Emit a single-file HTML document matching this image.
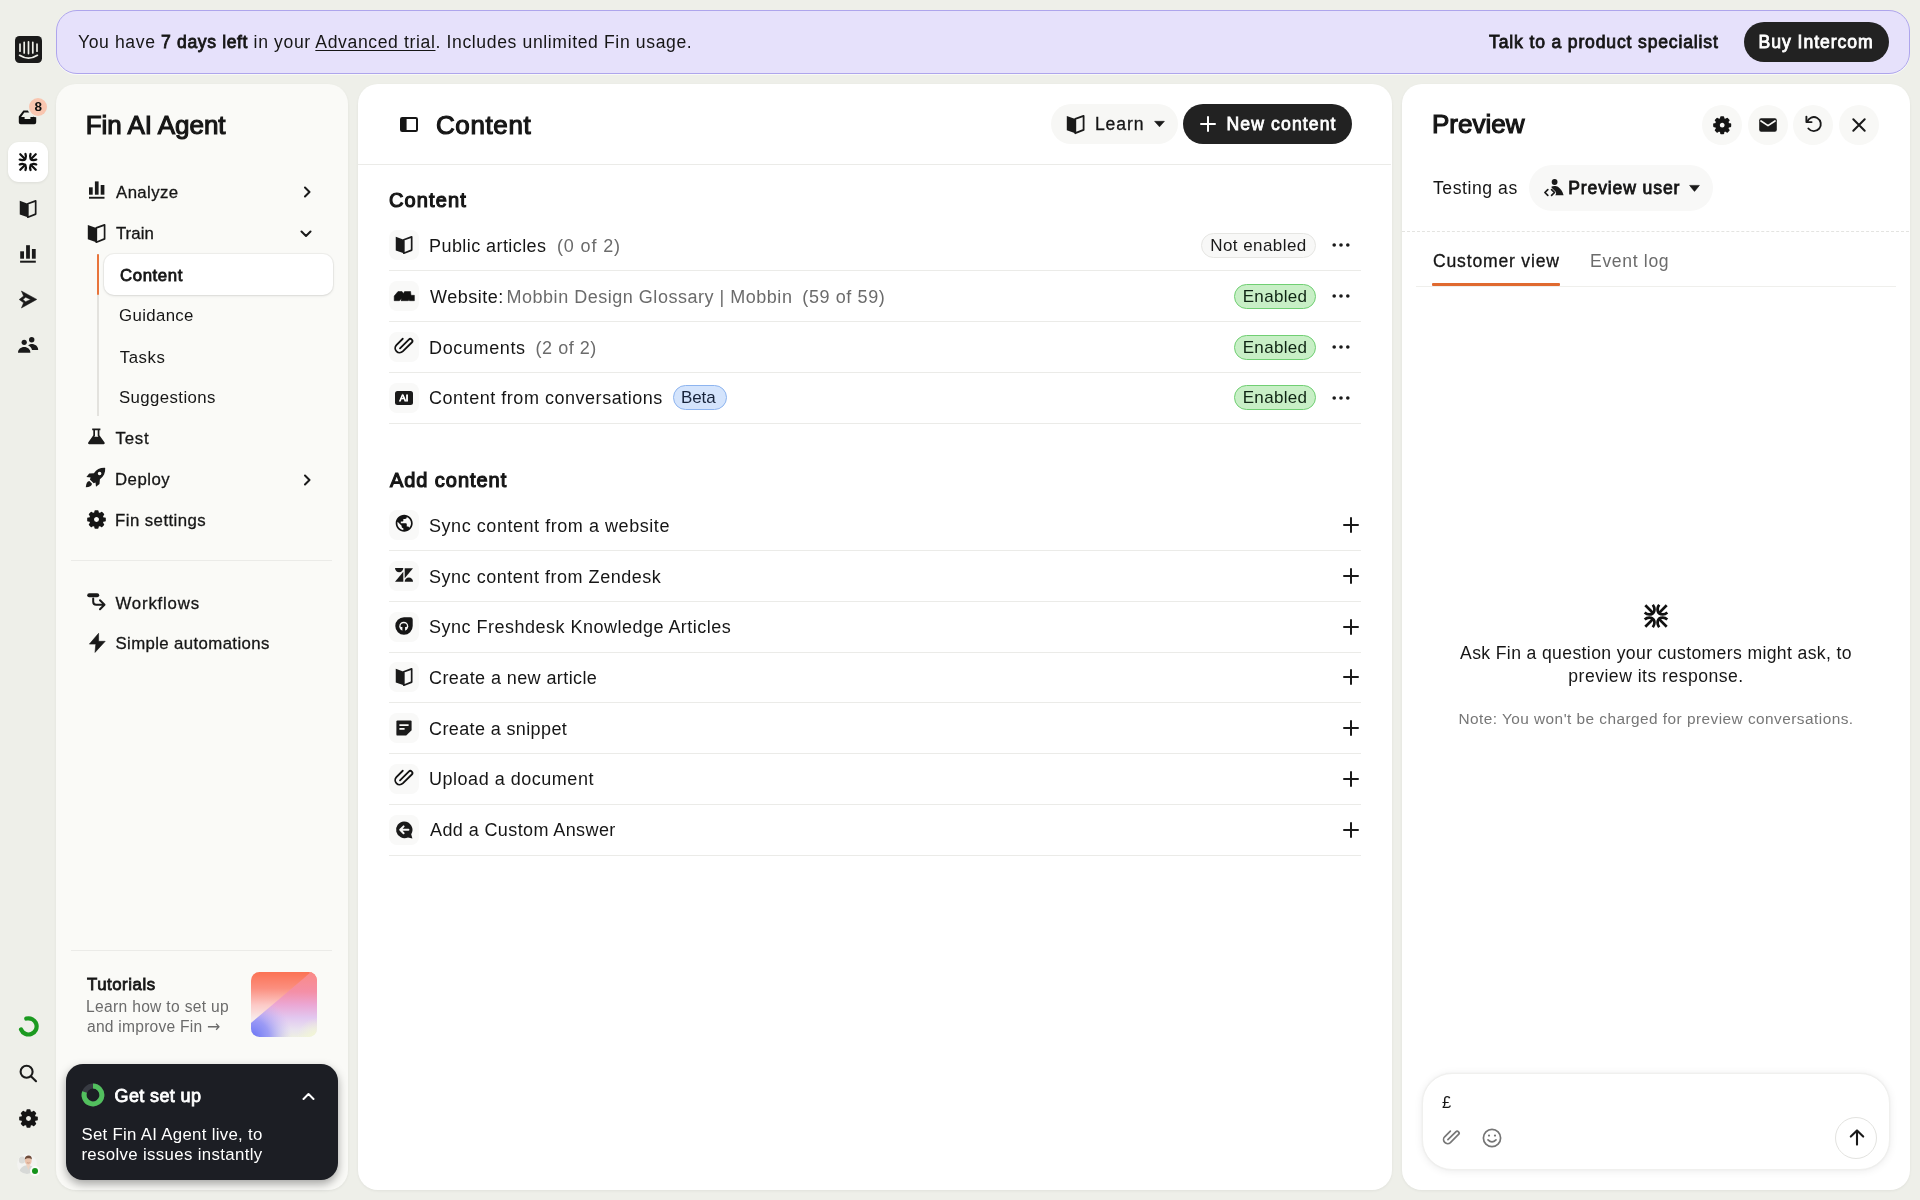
<!DOCTYPE html>
<html lang="en">
<head>
<meta charset="utf-8">
<title>Fin AI Agent – Content</title>
<style>
*{box-sizing:border-box;margin:0;padding:0}
html,body{width:1920px;height:1200px;overflow:hidden}
body{background:#eeefe9;font-family:"Liberation Sans",Arial,sans-serif;font-size:16.8px;color:#161616;position:relative;-webkit-font-smoothing:antialiased}
.abs{position:absolute}
#banner,#rail,#side,#main,#prev{will-change:transform}
.t{position:absolute;white-space:nowrap;line-height:20px;height:20px}
.m{-webkit-text-stroke:0.3px currentColor}
.b{font-weight:400;-webkit-text-stroke:.8px currentColor}
.hb{font-weight:400;-webkit-text-stroke:1.15px currentColor}
svg{display:block;position:absolute;overflow:visible}
/* banner */
#banner{left:56px;top:10px;width:1854px;height:64px;border-radius:21px;background:#e6e1fb;border:1.5px solid #aea5ec;box-shadow:0 1px 0 rgba(255,255,255,.6)}
/* panels */
#side{left:56px;top:84px;width:292px;height:1106px;border-radius:20px;background:#fafaf7;box-shadow:0 1px 3px rgba(0,0,0,.06)}
#main{left:358px;top:84px;width:1034px;height:1106px;border-radius:20px;background:#fff;box-shadow:0 1px 3px rgba(0,0,0,.06)}
#prev{left:1402px;top:84px;width:508px;height:1106px;border-radius:20px;background:#fff;box-shadow:0 1px 3px rgba(0,0,0,.06)}
.hr{position:absolute;height:1px;background:#ebebe8}
.ib{position:absolute;left:30.7px;width:30px;height:30px;border-radius:8px;background:#f9f9f8}
.row{position:absolute;left:71px;font-size:18px;letter-spacing:.25px}
.grey{color:#6b6b6b}
.pill{position:absolute;height:25px;border-radius:13px;font-size:16px;line-height:23px;text-align:center;border:1px solid}
.en{left:876px;width:82px;background:#c8efc6;border-color:#70cf73;color:#14301a}
.ne{left:843px;width:115px;background:#f8f8f7;border-color:#e6e6e3;color:#1a1a1a}
.cb{position:absolute;top:20px;width:40px;height:40px;border-radius:20px;background:#f8f8f6}
</style>
</head>
<body>

<!-- ===== top banner ===== -->
<div id="banner" class="abs">
  <div id="t1" class="t" style="left:20.9px;top:20.8px;font-size:17.6px;letter-spacing:0.62px">You have <span class="b">7 days left</span> in your <span style="text-decoration:underline;text-underline-offset:2px;text-decoration-thickness:1px">Advanced trial</span>. Includes unlimited Fin usage.</div>
  <div id="t2" class="t b" style="left:1432.1px;top:20.8px;font-size:17.6px;letter-spacing:0.83px">Talk to a product specialist</div>
  <div class="abs" style="left:1687px;top:11px;width:145px;height:40px;border-radius:20px;background:#222"></div>
  <div id="t3" class="t b" style="left:1701.5px;top:20.8px;font-size:17.6px;color:#fff;letter-spacing:0.96px">Buy Intercom</div>
</div>

<!-- ===== left rail ===== -->
<div id="rail" class="abs" style="left:0;top:0;width:56px;height:1200px">
  <div class="abs" style="left:8px;top:142px;width:40px;height:40px;border-radius:11px;background:#fff;box-shadow:0 1px 3px rgba(0,0,0,.08)"></div>

  <!-- logo -->
  <svg style="left:14.5px;top:36px" width="27" height="27" viewBox="0 0 27 27"><rect width="27" height="27" rx="4.5" fill="#1a1a1a"/><g stroke="#eeefe9" stroke-width="1.7" stroke-linecap="round" fill="none"><path d="M5 8.2V15.2M9.2 6.3V17M13.5 5.8V17.6M17.8 6.3V17M22 8.2V15.2"/><path d="M4.6 19.3Q13.5 25 22.4 19.3"/></g></svg>
  <!-- inbox -->
  <svg style="left:17.9px;top:109.9px" width="19" height="14.6" viewBox="0 0 19 14" preserveAspectRatio="none" fill="#111"><path d="M5.4 0.4H13.6L18.2 6.2V11.7Q18.2 13.6 16.3 13.6H2.7Q0.8 13.6 0.8 11.7V6.2ZM6.3 2.3 3.1 6.6H6.6V8.7H12.4V6.6H15.9L12.7 2.3Z" fill-rule="evenodd"/></svg>
  <div class="abs" style="left:29.4px;top:98.1px;width:17.6px;height:17.6px;border-radius:9px;background:#f9c6b0;box-shadow:0 0 0 1.6px #eeefe9"></div>
  <div id="t4" class="t" style="left:29.4px;top:97.2px;width:17.6px;text-align:center;font-size:13.5px;font-weight:700;color:#111">8</div>
  <!-- fin -->
  <svg style="left:19px;top:153.4px" width="18" height="18" viewBox="0 0 24 24" fill="none" stroke="#111" stroke-width="3" stroke-linecap="round"><g><path d="M1.7 1.7 8.3 8.3"/><path d="M8.6 1.3C10.2 5.2 8.6 9.6 4.6 9.6C3.2 9.6 2 9.3 1 8.8"/></g><g transform="translate(24 0) scale(-1 1)"><path d="M1.7 1.7 8.3 8.3"/><path d="M8.6 1.3C10.2 5.2 8.6 9.6 4.6 9.6C3.2 9.6 2 9.3 1 8.8"/></g><g transform="translate(0 24) scale(1 -1)"><path d="M1.7 1.7 8.3 8.3"/><path d="M8.6 1.3C10.2 5.2 8.6 9.6 4.6 9.6C3.2 9.6 2 9.3 1 8.8"/></g><g transform="translate(24 24) scale(-1 -1)"><path d="M1.7 1.7 8.3 8.3"/><path d="M8.6 1.3C10.2 5.2 8.6 9.6 4.6 9.6C3.2 9.6 2 9.3 1 8.8"/></g></svg>
  <!-- book -->
  <svg style="left:19px;top:200px" width="18" height="18" viewBox="0 0 19 19"><path d="M0.8 0.9 9.3 3.9V18.2L0.8 15.2Z" fill="#1a1a1a"/><path d="M9.3 3.9 17.6 0.9V14.9L9.3 18.2Z" fill="none" stroke="#1a1a1a" stroke-width="1.8" stroke-linejoin="round"/></svg>
  <!-- chart -->
  <svg style="left:20px;top:245px" width="16" height="18" viewBox="0 0 16 18" fill="#1a1a1a"><rect x="0.2" y="6.3" width="3.8" height="7.4"/><rect x="6.1" y="0.2" width="3.8" height="13.5"/><rect x="11.9" y="4" width="3.8" height="9.7"/><rect x="0.1" y="15.7" width="15.7" height="2"/></svg>
  <!-- send -->
  <svg style="left:19px;top:291px" width="18" height="17" viewBox="0 0 18 17" fill="#1a1a1a"><path d="M2.4 0 17.8 8.4 2.4 17 4.6 11.8 0.2 8.5 4.6 5.1ZM6.6 6.3 3.9 8.5 6.6 10.7 11.6 8.4Z" fill-rule="evenodd" stroke="#1a1a1a" stroke-width=".5" stroke-linejoin="round"/></svg>
  <!-- people -->
  <svg style="left:18px;top:337px" width="21" height="16" viewBox="0 0 21 16" fill="#1a1a1a"><circle cx="6.2" cy="5.3" r="2.6"/><circle cx="13.7" cy="2.8" r="2.7"/><path d="M0 15.7C0 12.3 2.8 10 6.2 10S12.4 12.3 12.4 15.7Z"/><path d="M10.2 8.6C11.2 7.6 12.4 7.1 13.7 7.1 17.1 7.1 20.2 9.4 20.2 13H14C13.5 11 12.2 9.4 10.2 8.6Z"/></svg>
  <!-- spinner -->
  <svg style="left:18px;top:1016px" width="21" height="21" viewBox="0 0 21 21" fill="none" stroke="#1b9a20" stroke-width="4.2" stroke-linecap="round"><path d="M8.3 2.6A8.1 8.1 0 1 1 3 13.4"/></svg>
  <!-- search -->
  <svg style="left:19px;top:1064px" width="19" height="19" viewBox="0 0 19 19" fill="none" stroke="#1a1a1a" stroke-width="2.1" stroke-linecap="round"><circle cx="7.6" cy="7.8" r="6"/><path d="M12.2 12.4 17 17.2"/></svg>
  <!-- gear -->
  <svg style="left:18.5px;top:1109px" width="19" height="19" viewBox="0 0 20 20"><path d="M8.39 3.29 L8.73 1.09 L11.27 1.09 L11.61 3.29 L13.61 4.12 L15.40 2.80 L17.20 4.60 L15.88 6.39 L16.71 8.39 L18.91 8.73 L18.91 11.27 L16.71 11.61 L15.88 13.61 L17.20 15.40 L15.40 17.20 L13.61 15.88 L11.61 16.71 L11.27 18.91 L8.73 18.91 L8.39 16.71 L6.39 15.88 L4.60 17.20 L2.80 15.40 L4.12 13.61 L3.29 11.61 L1.09 11.27 L1.09 8.73 L3.29 8.39 L4.12 6.39 L2.80 4.60 L4.60 2.80 L6.39 4.12Z M10 6.5a3.5 3.5 0 1 0 0 7a3.5 3.5 0 1 0 0-7Z" fill="#151515" stroke="#151515" stroke-width="1.8" stroke-linejoin="round" fill-rule="evenodd"/></svg>
  <!-- avatar -->
  <svg style="left:17.3px;top:1154px" width="20" height="20" viewBox="0 0 20 20"><defs><clipPath id="av"><circle cx="10" cy="10" r="10"/></clipPath></defs><g clip-path="url(#av)"><rect width="20" height="20" fill="#f3f3f1"/><ellipse cx="5" cy="6" rx="3.2" ry="3.6" fill="#dcdcd9"/><path d="M1.5 20C2.5 14 6 11.2 10.5 11.2S17.5 13.5 18.5 20Z" fill="#d7d9d7"/><path d="M9 10.5 11.5 16 13.5 10.5Z" fill="#eed3c2"/><ellipse cx="11.3" cy="6.8" rx="3.3" ry="4" fill="#ebc4ad"/><path d="M7.8 5.6C7.8 2.6 9.4 1.4 11.6 1.4S15 2.8 14.8 5.4C13.6 4 9.6 3.8 7.8 5.6Z" fill="#6d4a38"/><path d="M9.9 8.6Q11.3 9.6 12.7 8.6" stroke="#b98570" stroke-width=".6" fill="none"/></g></svg>
  <div class="abs" style="left:29.9px;top:1166.3px;width:10px;height:10px;border-radius:5px;background:#fbfbf9"></div>
  <div class="abs" style="left:31.8px;top:1168.2px;width:6.2px;height:6.2px;border-radius:3.1px;background:#15931a"></div>
  <!--RAIL-ICONS-->
</div>

<!-- ===== sidebar ===== -->
<div id="side" class="abs">
  <div id="t5" class="t hb" style="left:29.7px;top:25.8px;font-size:26px;line-height:30px;height:30px;letter-spacing:-0.03px">Fin AI Agent</div>

  <!-- Analyze -->
  <svg style="left:33px;top:97px" width="16" height="18" viewBox="0 0 16 18" fill="#1a1a1a"><rect x="0" y="6.3" width="3.7" height="7.4"/><rect x="5.9" y="0.4" width="3.7" height="13.3"/><rect x="11.7" y="4" width="3.7" height="9.7"/><rect x="0" y="15.8" width="15.5" height="1.9"/></svg>
  <div id="t6" class="t m" style="left:60.1px;top:98.5px;letter-spacing:0.37px">Analyze</div>
  <svg style="left:246px;top:102px" width="10" height="12" viewBox="0 0 10 12" fill="none" stroke="#1a1a1a" stroke-width="2" stroke-linecap="round" stroke-linejoin="round"><path d="M3 1.5 7.5 6 3 10.5"/></svg>
  <!-- Train -->
  <svg style="left:31px;top:140px" width="19" height="19" viewBox="0 0 19 19"><path d="M0.8 0.9 9.3 3.9V18.2L0.8 15.2Z" fill="#1a1a1a"/><path d="M9.3 3.9 17.6 0.9V14.9L9.3 18.2Z" fill="none" stroke="#1a1a1a" stroke-width="1.7" stroke-linejoin="round"/></svg>
  <div id="t7" class="t m" style="left:59.9px;top:140.3px;letter-spacing:0.08px">Train</div>
  <svg style="left:244px;top:145px" width="12" height="10" viewBox="0 0 12 10" fill="none" stroke="#1a1a1a" stroke-width="2" stroke-linecap="round" stroke-linejoin="round"><path d="M1.5 2.5 6 7 10.5 2.5"/></svg>
  <!-- sub nav -->
  <div class="abs" style="left:41px;top:170px;width:1.5px;height:162px;background:#e3e2de"></div>
  <div class="abs" style="left:40.5px;top:170px;width:2.5px;height:41px;background:#e8743b;border-radius:1px"></div>
  <div class="abs" style="left:48px;top:170px;width:229px;height:41px;border-radius:10px;background:#fff;box-shadow:0 0 0 1px rgba(0,0,0,.04),0 1px 3px rgba(0,0,0,.10)"></div>
  <div id="t8" class="t b" style="left:64px;top:182.3px;letter-spacing:0.6px">Content</div>
  <div id="t9" class="t" style="left:63px;top:222.3px;letter-spacing:0.37px">Guidance</div>
  <div id="t10" class="t" style="left:63.8px;top:263.5px;letter-spacing:0.53px">Tasks</div>
  <div id="t11" class="t" style="left:63px;top:304px;letter-spacing:0.4px">Suggestions</div>
  <!-- Test -->
  <svg style="left:31px;top:344px" width="19" height="17" viewBox="0 0 19 17" fill="#1a1a1a"><path d="M5.2 0.6H13.4V2.3H12.4V7.2L17.6 14.6Q18.2 16.2 16.6 16.2H2.2Q0.6 16.2 1.2 14.6L6.3 7.2V2.3H5.2Z M8 2.3V7.7L7.3 8.8H11.4L10.7 7.7V2.3Z" fill-rule="evenodd"/></svg>
  <div id="t12" class="t m" style="left:59.5px;top:344.8px;letter-spacing:0.81px">Test</div>
  <!-- Deploy -->
  <svg style="left:29px;top:383px" width="21" height="21" viewBox="0 0 21 21" fill="#1a1a1a"><path d="M20.2 0.9C15.5 0.6 11.6 2.4 8.9 6.2L4.2 6.6 1.4 10.1 5.6 10.6 4.9 12.4 8.7 16.2 10.5 15.5 11 19.7 14.5 16.9 14.9 12.2C18.7 9.5 20.5 5.6 20.2 0.9ZM14.6 8.3A1.8 1.8 0 1 1 14.6 4.7 1.8 1.8 0 0 1 14.6 8.3Z" fill-rule="evenodd"/><path d="M4.4 14.1C2.2 14.4 1.1 16.4 0.8 20.3 4.7 20 6.7 18.9 7 16.7Z"/></svg>
  <div id="t13" class="t m" style="left:59px;top:385.5px;letter-spacing:0.5px">Deploy</div>
  <svg style="left:246px;top:390px" width="10" height="12" viewBox="0 0 10 12" fill="none" stroke="#1a1a1a" stroke-width="2" stroke-linecap="round" stroke-linejoin="round"><path d="M3 1.5 7.5 6 3 10.5"/></svg>
  <!-- Fin settings -->
  <svg style="left:30.9px;top:426px" width="19" height="19" viewBox="0 0 20 20"><path d="M8.39 3.29 L8.73 1.09 L11.27 1.09 L11.61 3.29 L13.61 4.12 L15.40 2.80 L17.20 4.60 L15.88 6.39 L16.71 8.39 L18.91 8.73 L18.91 11.27 L16.71 11.61 L15.88 13.61 L17.20 15.40 L15.40 17.20 L13.61 15.88 L11.61 16.71 L11.27 18.91 L8.73 18.91 L8.39 16.71 L6.39 15.88 L4.60 17.20 L2.80 15.40 L4.12 13.61 L3.29 11.61 L1.09 11.27 L1.09 8.73 L3.29 8.39 L4.12 6.39 L2.80 4.60 L4.60 2.80 L6.39 4.12Z M10 6.5a3.5 3.5 0 1 0 0 7a3.5 3.5 0 1 0 0-7Z" fill="#151515" stroke="#151515" stroke-width="1.8" stroke-linejoin="round" fill-rule="evenodd"/></svg>
  <div id="t14" class="t m" style="left:59px;top:427.3px;letter-spacing:0.45px">Fin settings</div>
  <div class="hr" style="left:15px;top:476px;width:261px"></div>
  <!-- Workflows -->
  <svg style="left:31px;top:509px" width="20" height="18" viewBox="0 0 20 18" fill="none" stroke="#1a1a1a" stroke-width="2" stroke-linecap="round" stroke-linejoin="round"><path d="M2.2 2.2H10.2" stroke-width="4"/><path d="M6.2 5.5V8.7Q6.2 11.7 9.2 11.7H17.2M13 7.2 17.5 11.7 13 16.2"/></svg>
  <div id="t15" class="t m" style="left:59.5px;top:509.6px;letter-spacing:0.81px">Workflows</div>
  <!-- Simple automations -->
  <svg style="left:33px;top:549px" width="17" height="20" viewBox="0 0 17 20" fill="#1a1a1a"><path d="M9.6 0.3 0.4 11.1H6.8L6 19.4 16.2 8.3H9.6Z" stroke="#1a1a1a" stroke-width=".6" stroke-linejoin="round"/></svg>
  <div id="t16" class="t m" style="left:59.5px;top:550.3px;letter-spacing:0.38px">Simple automations</div>
  <!-- tutorials -->
  <div class="hr" style="left:15px;top:866px;width:261px"></div>
  <div id="t17" class="t b" style="left:31px;top:890.5px;letter-spacing:0.54px">Tutorials</div>
  <div id="t18" class="t grey" style="left:30px;top:912.8px;font-size:15.6px;letter-spacing:0.32px">Learn how to set up</div>
  <div id="t19" class="t grey" style="left:31px;top:933px;font-size:15.6px;letter-spacing:0.24px">and improve Fin <span style="font-family:'DejaVu Sans',sans-serif;font-size:16px;letter-spacing:0">→</span></div>
  <div class="abs" style="left:195.3px;top:887.7px;width:66px;height:65.6px;border-radius:8.5px;overflow:hidden">
    <svg style="left:0;top:0" width="66" height="65.6" viewBox="0 0 66 65.6">
      <defs>
        <linearGradient id="ga" x1="0" y1="0" x2="0" y2="1"><stop offset="0" stop-color="#fb7254"/><stop offset=".25" stop-color="#fb8f7f"/><stop offset=".5" stop-color="#fcc9c6"/><stop offset=".72" stop-color="#f8eceb"/><stop offset="1" stop-color="#f6f3ef"/></linearGradient>
        <linearGradient id="gb" x1="0" y1="0" x2="0" y2="1"><stop offset="0" stop-color="#fa8a86"/><stop offset=".3" stop-color="#f48fa6"/><stop offset=".5" stop-color="#eba7d4"/><stop offset=".7" stop-color="#e2c8f0"/><stop offset=".88" stop-color="#e9e3ef"/><stop offset="1" stop-color="#eef0e2"/></linearGradient>
        <radialGradient id="gc" cx="0" cy="1" r=".62"><stop offset="0" stop-color="#6470f5"/><stop offset=".45" stop-color="#8f90f6" stop-opacity=".85"/><stop offset="1" stop-color="#c9b8f4" stop-opacity="0"/></radialGradient>
        <radialGradient id="gd" cx="1" cy="1" r=".3"><stop offset="0" stop-color="#f3f8d2"/><stop offset="1" stop-color="#f3f8d2" stop-opacity="0"/></radialGradient>
      </defs>
      <rect width="66" height="65.6" fill="url(#ga)"/>
      <polygon points="0,51 60,0 66,0 66,65.6 0,65.6" fill="url(#gb)"/>
      <polygon points="0,51 60,0 66,0 66,65.6 0,65.6" fill="url(#gc)"/>
      <rect width="66" height="65.6" fill="url(#gd)"/>
    </svg>
  </div>
  <!-- get set up -->
  <div class="abs" style="left:10px;top:980px;width:272px;height:116px;border-radius:17px;background:#1c1e24;box-shadow:0 4px 10px rgba(0,0,0,.35)"></div>
  <svg style="left:25px;top:999px" width="24" height="24" viewBox="0 0 24 24" fill="none"><circle cx="12" cy="12" r="8.9" stroke="#383b43" stroke-width="5"/><path d="M12 3.1A8.9 8.9 0 1 1 3.6 9" stroke="#52c05e" stroke-width="5"/></svg>
  <div id="t20" class="t b" style="left:58.5px;top:1002px;color:#fff;font-size:18px;letter-spacing:0.38px">Get set up</div>
  <svg style="left:246px;top:1008px" width="13" height="9" viewBox="0 0 13 9" fill="none" stroke="#fff" stroke-width="2" stroke-linecap="round" stroke-linejoin="round"><path d="M1.5 7 6.5 2 11.5 7"/></svg>
  <div id="t21" class="t" style="left:25.4px;top:1040.5px;color:#fff;letter-spacing:0.31px">Set Fin AI Agent live, to</div>
  <div id="t22" class="t" style="left:25.4px;top:1061px;color:#fff;letter-spacing:0.36px">resolve issues instantly</div>
  <!--SIDE-NAV-->
</div>

<!-- ===== main ===== -->
<div id="main" class="abs">
  <div id="t23" class="t hb" style="left:77.9px;top:25.7px;font-size:26px;line-height:30px;height:30px;letter-spacing:0.63px">Content</div>
  <div class="hr" style="left:0;top:80px;width:1033px"></div>
  <svg style="left:42px;top:33px" width="18" height="15" viewBox="0 0 18 15"><rect x="1" y="1" width="16" height="13" rx="1.2" fill="none" stroke="#151515" stroke-width="2"/><rect x="1" y="1" width="5.6" height="13" rx="1" fill="#151515"/></svg>
  <div class="abs" style="left:693px;top:19.5px;width:127px;height:40.5px;border-radius:20.5px;background:#f7f7f5"></div>
  <svg style="left:708px;top:31px" width="19" height="19" viewBox="0 0 19 19"><path d="M0.8 0.9 9.3 3.9V18.2L0.8 15.2Z" fill="#1a1a1a"/><path d="M9.3 3.9 17.6 0.9V14.9L9.3 18.2Z" fill="none" stroke="#1a1a1a" stroke-width="1.8" stroke-linejoin="round"/></svg>
  <div id="t24" class="t m" style="left:736.9px;top:30px;font-size:17.6px;letter-spacing:0.9px">Learn</div>
  <svg style="left:796px;top:37px" width="11" height="6" viewBox="0 0 11 6"><path d="M0.6 0.3H10.4L5.5 5.8Z" fill="#1a1a1a" stroke="#1a1a1a" stroke-width=".6" stroke-linejoin="round"/></svg>
  <div class="abs" style="left:825px;top:19.5px;width:168.5px;height:40.5px;border-radius:20.5px;background:#222"></div>
  <svg style="left:842.0px;top:32.0px" width="16" height="16" viewBox="0 0 16 16" fill="none" stroke="#fff" stroke-width="2" stroke-linecap="round"><path d="M8 1V15M1 8H15"/></svg>
  <div id="t25" class="t b" style="left:868.5px;top:30px;font-size:17.6px;color:#fff;letter-spacing:1.12px">New content</div>
  <div id="t26" class="t hb"  style="left:30.9px;top:104px;font-size:20px;line-height:24px;height:24px;letter-spacing:1.13px">Content</div>
  <div class="ib" style="top:146.4px"></div>
  <div id="t27" class="row t" style="left:71px;top:152px;letter-spacing:0.43px">Public articles</div>
  <div id="t28" class="row t grey" style="left:199px;top:152px;letter-spacing:0.86px">(0 of 2)</div>
  <div class="pill ne" style="top:149.0px"></div><div id="p1" class="t" style="left:843px;width:115px;text-align:center;top:151.9px;font-size:17px;color:#1a1a1a;letter-spacing:0.43px">Not enabled</div>
  <svg style="left:974px;top:158.4px" width="18" height="6" viewBox="0 0 18 6" fill="#1a1a1a"><circle cx="2.2" cy="3" r="1.8"/><circle cx="9" cy="3" r="1.8"/><circle cx="15.8" cy="3" r="1.8"/></svg>
  <div class="hr" style="left:31px;top:186.3px;width:972px"></div>
  <div class="ib" style="top:197.2px"></div>
  <div id="t29" class="row t" style="left:72px;top:203.3px;letter-spacing:0.51px">Website:</div>
  <div id="t30" class="row t grey" style="left:148.5px;top:203.3px;letter-spacing:0.52px">Mobbin Design Glossary | Mobbin</div>
  <div id="t31" class="row t grey" style="left:444.3px;top:203.3px;letter-spacing:0.61px">(59 of 59)</div>
  <div class="pill en" style="top:199.8px"></div><div id="p2" class="t" style="left:876px;width:82px;text-align:center;top:202.7px;font-size:17px;color:#0f2414;letter-spacing:0.31px">Enabled</div>
  <svg style="left:974px;top:209.2px" width="18" height="6" viewBox="0 0 18 6" fill="#1a1a1a"><circle cx="2.2" cy="3" r="1.8"/><circle cx="9" cy="3" r="1.8"/><circle cx="15.8" cy="3" r="1.8"/></svg>
  <div class="hr" style="left:31px;top:237.1px;width:972px"></div>
  <div class="ib" style="top:248.0px"></div>
  <div id="t32" class="row t" style="left:71px;top:253.8px;letter-spacing:0.63px">Documents</div>
  <div id="t33" class="row t grey" style="left:177.6px;top:253.8px;letter-spacing:0.51px">(2 of 2)</div>
  <div class="pill en" style="top:250.6px"></div><div id="p3" class="t" style="left:876px;width:82px;text-align:center;top:253.5px;font-size:17px;color:#0f2414;letter-spacing:0.31px">Enabled</div>
  <svg style="left:974px;top:260.0px" width="18" height="6" viewBox="0 0 18 6" fill="#1a1a1a"><circle cx="2.2" cy="3" r="1.8"/><circle cx="9" cy="3" r="1.8"/><circle cx="15.8" cy="3" r="1.8"/></svg>
  <div class="hr" style="left:31px;top:287.9px;width:972px"></div>
  <div class="ib" style="top:298.8px"></div>
  <div id="t34" class="row t" style="left:71px;top:303.8px;letter-spacing:0.53px">Content from conversations</div>
  <div class="pill" style="left:315px;top:301.4px;width:53.5px;background:#d4e4fc;border-color:#8db4ef;color:#16233a"></div><div id="p4" class="t" style="left:313.5px;width:53.5px;text-align:center;top:304.3px;font-size:17px;color:#16233a;letter-spacing:-0.07px">Beta</div>
  <div class="pill en" style="top:301.4px"></div><div id="p5" class="t" style="left:876px;width:82px;text-align:center;top:304.3px;font-size:17px;color:#0f2414;letter-spacing:0.31px">Enabled</div>
  <svg style="left:974px;top:310.8px" width="18" height="6" viewBox="0 0 18 6" fill="#1a1a1a"><circle cx="2.2" cy="3" r="1.8"/><circle cx="9" cy="3" r="1.8"/><circle cx="15.8" cy="3" r="1.8"/></svg>
  <div class="hr" style="left:31px;top:338.7px;width:972px"></div>
  <svg style="left:37px;top:152px" width="18" height="18" viewBox="0 0 19 19"><path d="M0.8 0.9 9.3 3.9V18.2L0.8 15.2Z" fill="#1a1a1a"/><path d="M9.3 3.9 17.6 0.9V14.9L9.3 18.2Z" fill="none" stroke="#1a1a1a" stroke-width="1.8" stroke-linejoin="round"/></svg>
  <svg style="left:35.5px;top:207.3px" width="21" height="10" viewBox="0 0 21 10" fill="#111"><path d="M0.2 9.7V5L4 0.5H8L9.4 2.6 10.6 0.5H16.6L17 4.3H20.4V9.7H15.4L15 8.6 14.4 9.7H7L7.4 7.4 5.4 9.7Z" stroke="#111" stroke-width=".5" stroke-linejoin="round"/></svg>
  <svg style="left:31px;top:248px" width="30" height="30" viewBox="0 0 30 30" fill="none" stroke="#111" stroke-width="1.8" stroke-linecap="round"><path d="M13.75 6.75 7.4 13.1A4.5 4.5 0 0 0 13.76 19.46L22.8 10.5A2.1 2.1 0 0 0 19.8 7.55L11 16.3"/></svg>
  <div class="abs" style="left:37px;top:307px;width:18px;height:13.5px;border-radius:2.5px;background:#1a1a1a"></div><div id="t35" class="t b" style="left:37px;top:307px;width:18px;height:13.5px;line-height:13.5px;text-align:center;font-size:9.5px;color:#fff;letter-spacing:0">AI</div>
  <div id="t36" class="t hb"  style="left:31.9px;top:383.8px;font-size:20px;line-height:24px;height:24px;letter-spacing:0.96px">Add content</div>
  <div class="ib" style="top:426.0px"></div>
  <div id="t37" class="row t" style="left:71px;top:431.8px;letter-spacing:0.55px">Sync content from a website</div>
  <svg style="left:985.0px;top:433.0px" width="16" height="16" viewBox="0 0 16 16" fill="none" stroke="#1a1a1a" stroke-width="2" stroke-linecap="round"><path d="M8 1V15M1 8H15"/></svg>
  <div class="hr" style="left:31px;top:466.0px;width:972px"></div>
  <div class="ib" style="top:476.8px"></div>
  <div id="t38" class="row t" style="left:71px;top:482.5px;letter-spacing:0.53px">Sync content from Zendesk</div>
  <svg style="left:985.0px;top:483.8px" width="16" height="16" viewBox="0 0 16 16" fill="none" stroke="#1a1a1a" stroke-width="2" stroke-linecap="round"><path d="M8 1V15M1 8H15"/></svg>
  <div class="hr" style="left:31px;top:516.8px;width:972px"></div>
  <div class="ib" style="top:527.6px"></div>
  <div id="t39" class="row t" style="left:71px;top:533.3px;letter-spacing:0.49px">Sync Freshdesk Knowledge Articles</div>
  <svg style="left:985.0px;top:534.6px" width="16" height="16" viewBox="0 0 16 16" fill="none" stroke="#1a1a1a" stroke-width="2" stroke-linecap="round"><path d="M8 1V15M1 8H15"/></svg>
  <div class="hr" style="left:31px;top:567.6px;width:972px"></div>
  <div class="ib" style="top:578.4px"></div>
  <div id="t40" class="row t" style="left:71px;top:583.8px;letter-spacing:0.41px">Create a new article</div>
  <svg style="left:985.0px;top:585.4px" width="16" height="16" viewBox="0 0 16 16" fill="none" stroke="#1a1a1a" stroke-width="2" stroke-linecap="round"><path d="M8 1V15M1 8H15"/></svg>
  <div class="hr" style="left:31px;top:618.4px;width:972px"></div>
  <div class="ib" style="top:629.2px"></div>
  <div id="t41" class="row t" style="left:71px;top:634.5px;letter-spacing:0.38px">Create a snippet</div>
  <svg style="left:985.0px;top:636.2px" width="16" height="16" viewBox="0 0 16 16" fill="none" stroke="#1a1a1a" stroke-width="2" stroke-linecap="round"><path d="M8 1V15M1 8H15"/></svg>
  <div class="hr" style="left:31px;top:669.2px;width:972px"></div>
  <div class="ib" style="top:680.0px"></div>
  <div id="t42" class="row t" style="left:71px;top:685px;letter-spacing:0.52px">Upload a document</div>
  <svg style="left:985.0px;top:687.0px" width="16" height="16" viewBox="0 0 16 16" fill="none" stroke="#1a1a1a" stroke-width="2" stroke-linecap="round"><path d="M8 1V15M1 8H15"/></svg>
  <div class="hr" style="left:31px;top:720.0px;width:972px"></div>
  <div class="ib" style="top:730.8px"></div>
  <div id="t43" class="row t" style="left:72px;top:735.8px;letter-spacing:0.4px">Add a Custom Answer</div>
  <svg style="left:985.0px;top:737.8px" width="16" height="16" viewBox="0 0 16 16" fill="none" stroke="#1a1a1a" stroke-width="2" stroke-linecap="round"><path d="M8 1V15M1 8H15"/></svg>
  <div class="hr" style="left:31px;top:770.8px;width:972px"></div>
  <svg style="left:35.55px;top:429.3px" width="20.4" height="20.4" viewBox="0 0 24 24" fill="#111"><path d="M12 2C6.48 2 2 6.48 2 12s4.48 10 10 10 10-4.48 10-10S17.52 2 12 2zm-1 17.93c-3.95-.49-7-3.85-7-7.93 0-.62.08-1.21.21-1.79L9 15v1c0 1.1.9 2 2 2v1.93zm6.9-2.54c-.26-.81-1-1.39-1.9-1.39h-1v-3c0-.55-.45-1-1-1H8v-2h2c.55 0 1-.45 1-1V7h2c1.1 0 2-.9 2-2v-.41c2.93 1.19 5 4.06 5 7.41 0 2.08-.8 3.97-2.1 5.39z"/></svg>
  <svg style="left:37px;top:483.6px" width="18" height="14" viewBox="0 0 18 14" fill="#1a1a1a"><path d="M8.3 3.7V13.7H0Z"/><path d="M0 0H8.3A4.15 4.15 0 0 1 0 0Z"/><path d="M9.7 10.3V0.3H18Z"/><path d="M9.7 13.7A4.15 4.15 0 0 1 18 13.7Z"/></svg>
  <svg style="left:37px;top:533.4px" width="18" height="18" viewBox="0 0 18 18"><path d="M9 0.3H15.4Q17.7 0.3 17.7 2.6V9A8.7 8.7 0 1 1 9 0.3Z" fill="#151515"/><circle cx="8.75" cy="9.3" r="4.5" fill="#f8f8f7"/><path d="M5.5 9.4A3.25 3.25 0 0 1 12 9.4L11.2 9.9H10.1V13.9H7.4V9.9H6.3Z" fill="#151515"/></svg>
  <svg style="left:37px;top:584.1px" width="18" height="18" viewBox="0 0 19 19"><path d="M0.8 0.9 9.3 3.9V18.2L0.8 15.2Z" fill="#1a1a1a"/><path d="M9.3 3.9 17.6 0.9V14.9L9.3 18.2Z" fill="none" stroke="#1a1a1a" stroke-width="1.8" stroke-linejoin="round"/></svg>
  <svg style="left:38px;top:635.7px" width="16" height="16" viewBox="0 0 16 16"><path d="M1.6 0.4H14.4Q15.6 0.4 15.6 1.6V10.2L10.2 15.6H1.6Q0.4 15.6 0.4 14.4V1.6Q0.4 0.4 1.6 0.4Z" fill="#1a1a1a"/><path d="M3.4 5.2H12.6M3.4 8.8H8.6" stroke="#f7f7f6" stroke-width="1.7"/></svg>
  <svg style="left:31px;top:680px" width="30" height="30" viewBox="0 0 30 30" fill="none" stroke="#111" stroke-width="1.8" stroke-linecap="round"><path d="M13.75 6.75 7.4 13.1A4.5 4.5 0 0 0 13.76 19.46L22.8 10.5A2.1 2.1 0 0 0 19.8 7.55L11 16.3"/></svg>
  <svg style="left:37px;top:736.5px" width="18" height="18" viewBox="0 0 18 18"><path d="M9 0.4A8.4 8.4 0 0 1 16.2 13.2L17.4 17.4 13 16.4A8.4 8.4 0 1 1 9 0.4Z" fill="#1a1a1a"/><path d="M13.4 8.8H5.6M8.6 5.4 5.2 8.8 8.6 12.2" fill="none" stroke="#f7f7f6" stroke-width="2" stroke-linecap="round" stroke-linejoin="round"/></svg>
  <!--MAIN-BODY-->
</div>

<!-- ===== preview ===== -->
<div id="prev" class="abs">
  <div id="t44" class="t hb" style="left:30px;top:25.3px;font-size:26px;line-height:30px;height:30px;letter-spacing:0.0px">Preview</div>
  <div class="cb" style="left:300px;top:20.7px"></div>
  <div class="cb" style="left:345.6px;top:20.7px"></div>
  <div class="cb" style="left:391px;top:20.7px"></div>
  <div class="cb" style="left:437px;top:20.7px"></div>
  <svg style="left:310.8px;top:31.5px" width="18.4" height="18.4" viewBox="0 0 20 20"><path d="M8.39 3.29 L8.73 1.09 L11.27 1.09 L11.61 3.29 L13.61 4.12 L15.40 2.80 L17.20 4.60 L15.88 6.39 L16.71 8.39 L18.91 8.73 L18.91 11.27 L16.71 11.61 L15.88 13.61 L17.20 15.40 L15.40 17.20 L13.61 15.88 L11.61 16.71 L11.27 18.91 L8.73 18.91 L8.39 16.71 L6.39 15.88 L4.60 17.20 L2.80 15.40 L4.12 13.61 L3.29 11.61 L1.09 11.27 L1.09 8.73 L3.29 8.39 L4.12 6.39 L2.80 4.60 L4.60 2.80 L6.39 4.12Z M10 6.5a3.5 3.5 0 1 0 0 7a3.5 3.5 0 1 0 0-7Z" fill="#151515" stroke="#151515" stroke-width="1.8" stroke-linejoin="round" fill-rule="evenodd"/></svg>
  <svg style="left:356.6px;top:33.7px" width="18" height="14" viewBox="0 0 18 14"><rect x="0.2" y="0.2" width="17.6" height="13.6" rx="2" fill="#1a1a1a"/><path d="M2 3 9 7.6 16 3" fill="none" stroke="#f7f7f5" stroke-width="1.7" stroke-linecap="round" stroke-linejoin="round"/></svg>
  <svg style="left:402px;top:31.2px" width="18" height="19" viewBox="0 0 18 19" fill="none" stroke="#1a1a1a" stroke-width="1.9" stroke-linecap="round" stroke-linejoin="round"><path d="M3.14 6.94A7 7 0 1 1 4.36 13.5"/><path d="M2.4 1.6V7.1H7.6"/></svg>
  <svg style="left:450px;top:33.7px" width="14" height="14" viewBox="0 0 14 14" fill="none" stroke="#1a1a1a" stroke-width="2" stroke-linecap="round"><path d="M1.3 1.3 12.7 12.7M12.7 1.3 1.3 12.7"/></svg>
  <div id="t45" class="t" style="left:31px;top:94.3px;font-size:17.6px;letter-spacing:0.56px">Testing as</div>
  <div class="abs" style="left:126.7px;top:80.5px;width:184px;height:46px;border-radius:23px;background:#f8f8f7"></div>
  <svg style="left:142.4px;top:95.4px" width="20" height="18" viewBox="0 0 20 18" fill="#1a1a1a"><circle cx="10.6" cy="3" r="2.9"/><path d="M7.6 7.6C9 6.8 12.6 6.9 14.2 8 16.6 9.6 18.6 12.6 19.6 16.2H11.2C12.4 15.2 12.4 13.6 11.4 12.6L7.6 8.8Z"/><path d="M3.8 10.6 0.9 13.5 3.8 16.4M7.6 10.6 10.5 13.5 7.6 16.4" fill="none" stroke="#1a1a1a" stroke-width="1.7" stroke-linecap="round" stroke-linejoin="round"/></svg>
  <div id="t46" class="t b" style="left:166.2px;top:94.3px;font-size:17.6px;letter-spacing:0.87px">Preview user</div>
  <svg style="left:287.3px;top:100.5px" width="11" height="7" viewBox="0 0 11 7"><path d="M0.6 0.4H10.4L5.5 6.4Z" fill="#1a1a1a" stroke="#1a1a1a" stroke-width=".6" stroke-linejoin="round"/></svg>
  <div class="abs" style="left:0;top:147px;width:507px;height:0;border-top:1px dashed #e4e4e1"></div>
  <div id="t47" class="t m" style="left:31px;top:166.6px;font-size:17.6px;letter-spacing:0.8px">Customer view</div>
  <div id="t48" class="t grey" style="left:188px;top:166.6px;font-size:17.6px;letter-spacing:0.66px">Event log</div>
  <div class="abs" style="left:14px;top:202px;width:480px;height:1px;background:#efefec"></div>
  <div class="abs" style="left:30px;top:198.5px;width:128px;height:3px;background:#e06a30;border-radius:1px"></div>
  <svg style="left:242px;top:520.3px" width="24" height="24" viewBox="0 0 24 24" fill="none" stroke="#111" stroke-width="2.7"><g><path d="M1.3 1.3 8.6 8.6"/><path d="M8.8 0.8C11.6 4.6 11 10.4 5.2 10.4C3.5 10.4 2 9.7 0.7 8.5"/></g><g transform="translate(24 0) scale(-1 1)"><path d="M1.3 1.3 8.6 8.6"/><path d="M8.8 0.8C11.6 4.6 11 10.4 5.2 10.4C3.5 10.4 2 9.7 0.7 8.5"/></g><g transform="translate(0 24) scale(1 -1)"><path d="M1.3 1.3 8.6 8.6"/><path d="M8.8 0.8C11.6 4.6 11 10.4 5.2 10.4C3.5 10.4 2 9.7 0.7 8.5"/></g><g transform="translate(24 24) scale(-1 -1)"><path d="M1.3 1.3 8.6 8.6"/><path d="M8.8 0.8C11.6 4.6 11 10.4 5.2 10.4C3.5 10.4 2 9.7 0.7 8.5"/></g></svg>
  <div id="t49" class="t" style="left:0;width:508px;text-align:center;top:558.9px;font-size:17.6px;letter-spacing:0.37px">Ask Fin a question your customers might ask, to</div>
  <div id="t50" class="t" style="left:0;width:508px;text-align:center;top:581.9px;font-size:17.6px;letter-spacing:0.48px">preview its response.</div>
  <div id="t51" class="t" style="left:0;width:508px;text-align:center;top:624.9px;font-size:15.4px;letter-spacing:0.46px;color:#767676">Note: You won't be charged for preview conversations.</div>
  <div class="abs" style="left:19.7px;top:988.5px;width:468.5px;height:97px;border-radius:30px;background:#fff;border:1px solid #f0f0ee;box-shadow:0 1px 8px rgba(0,0,0,.08),0 0 2px rgba(0,0,0,.05)"></div>
  <div id="t52" class="t" style="left:40px;top:1008.3px;font-size:16.5px;letter-spacing:13.0px">£</div>
  <svg style="left:36.1px;top:1041.3px" width="27" height="27" viewBox="0 0 30 30" fill="none" stroke="#777" stroke-width="1.9" stroke-linecap="round"><path d="M13.75 6.75 7.4 13.1A4.5 4.5 0 0 0 13.76 19.46L22.8 10.5A2.1 2.1 0 0 0 19.8 7.55L11 16.3"/></svg>
  <svg style="left:80px;top:1043.5px" width="20" height="20" viewBox="0 0 20 20" fill="none" stroke="#757575" stroke-width="1.7" stroke-linecap="round"><circle cx="10" cy="10" r="8.6"/><path d="M6 11.8Q10 15.8 14 11.8"/><circle cx="7" cy="7.6" r="1.1" fill="#757575" stroke="none"/><circle cx="13" cy="7.6" r="1.1" fill="#757575" stroke="none"/></svg>
  <div class="abs" style="left:433.4px;top:1032.5px;width:42px;height:42px;border-radius:21px;border:1px solid #e3e3e0;background:#fff"></div>
  <svg style="left:446.6px;top:1045.3px" width="16" height="17" viewBox="0 0 16 17" fill="none" stroke="#1a1a1a" stroke-width="2.1" stroke-linecap="round" stroke-linejoin="round"><path d="M8 15.6V1.6M1.8 7.6 8 1.4 14.2 7.6"/></svg>
  <!--PREV-BODY-->
</div>

</body>
</html>
